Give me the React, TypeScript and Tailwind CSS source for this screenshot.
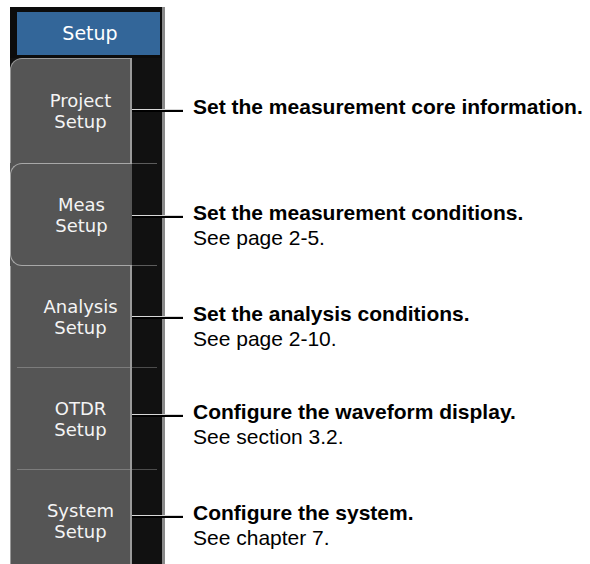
import React from "react";

type Kind = "first" | "selected" | "plain" | "sep";
type Row = {
  label: [string, string];
  title: string;
  sub?: string;
  kind: Kind;
  h: string;
  mt: string;
};

const rows: Row[] = [
  { label: ["Project", "Setup"], title: "Set the measurement core information.", kind: "first", h: "h-[105px]", mt: "mt-[36px]" },
  { label: ["Meas", "Setup"], title: "Set the measurement conditions.", sub: "See page 2-5.", kind: "selected", h: "h-[103px]", mt: "mt-[37px]" },
  { label: ["Analysis", "Setup"], title: "Set the analysis conditions.", sub: "See page 2-10.", kind: "plain", h: "h-[101px]", mt: "mt-[35px]" },
  { label: ["OTDR", "Setup"], title: "Configure the waveform display.", sub: "See section 3.2.", kind: "sep", h: "h-[102px]", mt: "mt-[32px]" },
  { label: ["System", "Setup"], title: "Configure the system.", sub: "See chapter 7.", kind: "sep", h: "h-[102px]", mt: "mt-[31px]" },
];

function Label({ lines }: { lines: [string, string] }) {
  return (
    <div className="flex flex-1 flex-col items-center justify-center pl-[20px]">
      <div className="text-center font-['DejaVu_Sans',sans-serif] text-[18px] leading-[21px] text-[#f4f4f4]">
        <div>{lines[0]}</div>
        <div>{lines[1]}</div>
      </div>
    </div>
  );
}

function Panel({ row }: { row: Row }) {
  if (row.kind === "first") {
    return (
      <div className="flex w-[155px] shrink-0 bg-[#111]">
        <div className="flex w-[122px] flex-col rounded-tl-[12px] border-l border-t border-r-2 border-[#9a9a9a] bg-[#555]">
          <Label lines={row.label} />
        </div>
        <div className="w-[30px] bg-[#111]" />
        <div className="w-[3px] bg-[#8a8a8a]" />
      </div>
    );
  }
  if (row.kind === "selected") {
    return (
      <div className="flex w-[155px] shrink-0 bg-[#555]">
        <div className="flex w-[122px] flex-col rounded-l-[12px] border-y border-l border-[#a8a8a8]">
          <Label lines={row.label} />
        </div>
        <div className="w-[30px] bg-[#111]">
          <div className="h-full w-[25px] border-y border-[#5c5c5c]" />
        </div>
        <div className="w-[3px] bg-[#8a8a8a]" />
      </div>
    );
  }
  return (
    <div className="flex w-[155px] shrink-0">
      <div className="flex w-[122px] flex-col border-l border-r-2 border-[#9a9a9a] bg-[#555]">
        {row.kind === "sep" && <div className="ml-[6px] h-px bg-[#7c7c7c]" />}
        <Label lines={row.label} />
      </div>
      <div className="w-[30px] bg-[#111]">
        {row.kind === "sep" && <div className="h-px w-[25px] bg-[#4c4c4c]" />}
      </div>
      <div className="w-[3px] bg-[#8a8a8a]" />
    </div>
  );
}

export default function App() {
  return (
    <div className="h-[564px] w-[590px] overflow-hidden bg-white pl-[10px] pt-[7px]">
      <div className="flex h-[51px] w-[155px] border-r-[3px] border-[#8a8a8a] bg-[#0c0c0c] pb-[3px] pl-[7px] pr-[2px] pt-[5px]">
        <div className="flex flex-1 items-center justify-center bg-[#336699] pl-[3px] font-['DejaVu_Sans',sans-serif] text-[19px] text-white">
          Setup
        </div>
      </div>
      {rows.map((row) => (
        <div key={row.label[0]} className={`flex ${row.h}`}>
          <Panel row={row} />
          <div className={`flex items-start ${row.mt}`}>
            <div className="-ml-[33px] mt-[15px] h-[3px] w-[51px] shrink-0 border-t border-t-[#d8d8d8] bg-black" />
            <div className="ml-[10px] whitespace-nowrap font-['Liberation_Sans',Arial,sans-serif] text-[21px] leading-[25px] text-black">
              <div className="font-bold">{row.title}</div>
              {row.sub && <div>{row.sub}</div>}
            </div>
          </div>
        </div>
      ))}
    </div>
  );
}
